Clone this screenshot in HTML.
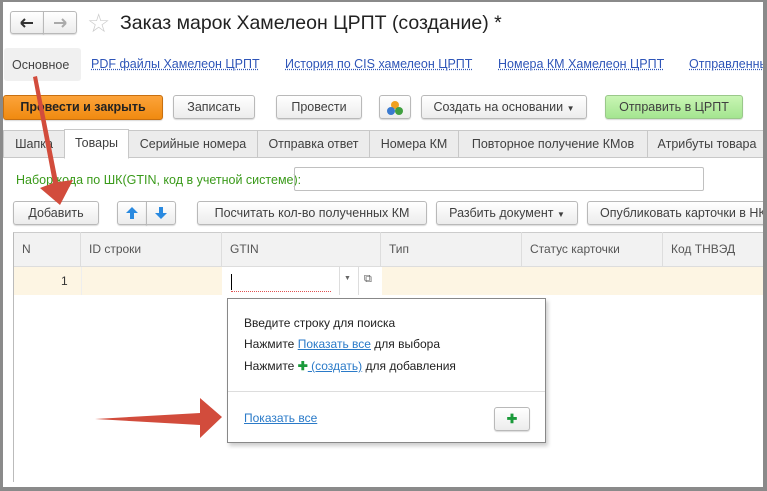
<!DOCTYPE html>
<html><head><meta charset="utf-8"><style>
*{box-sizing:border-box}
body{margin:0;width:767px;height:491px;background:#8a8a8a;font-family:"Liberation Sans",sans-serif;font-size:12px;color:#333;overflow:hidden;position:relative}
#w{position:absolute;left:3px;top:2px;width:760px;height:485px;background:#fff;overflow:hidden}
.a{position:absolute;white-space:nowrap}
.btn{position:absolute;height:24px;border:1px solid #b9b9b9;border-radius:3px;background:linear-gradient(#fff,#ececec);box-shadow:0 1px 1px rgba(0,0,0,.15);text-align:center;line-height:22px;color:#404040;font-size:12.5px;white-space:nowrap}
.lnk{color:#2e55b8;text-decoration:underline;text-decoration-style:dotted;position:absolute;white-space:nowrap;font-size:12.5px}
.tab{position:absolute;top:128px;height:28px;border:1px solid #c8c8c8;background:#ececec;line-height:26px;text-align:center;color:#404040;font-size:12.5px}
.th{position:absolute;top:230px;height:34px;line-height:34px;border-right:1px solid #ddd;padding-left:8px;color:#555}
</style></head><body><div id="w">
<div class="btn" style="left:7px;top:9px;width:34px;height:23px;border-radius:3px 0 0 3px"><svg width="16" height="12" viewBox="0 0 16 12" style="margin-top:5px"><path d="M2 6H14M2 6L6 2M2 6L6 10" stroke="#333" stroke-width="2" fill="none"/></svg></div>
<div class="btn" style="left:40px;top:9px;width:34px;height:23px;border-radius:0 3px 3px 0"><svg width="16" height="12" viewBox="0 0 16 12" style="margin-top:5px"><path d="M2 6H14M14 6L10 2M14 6L10 10" stroke="#aaa" stroke-width="2" fill="none"/></svg></div>
<div class="a" style="left:84px;top:6px;font-size:26px;color:#ccc">☆</div>
<div class="a" style="left:117px;top:10px;font-size:19.5px;color:#222">Заказ марок Хамелеон ЦРПТ (создание) *</div>
<div class="a" style="left:1px;top:46px;width:77px;height:33px;background:#f0f0f0;border-radius:3px"></div>
<div class="a" style="left:9px;top:56px;color:#444;font-size:12.5px">Основное</div>
<div class="lnk" style="left:88px;top:55px">PDF файлы  Хамелеон ЦРПТ</div>
<div class="lnk" style="left:282px;top:55px">История по CIS хамелеон ЦРПТ</div>
<div class="lnk" style="left:495px;top:55px">Номера КМ Хамелеон ЦРПТ</div>
<div class="lnk" style="left:686px;top:55px">Отправленные</div>
<div class="btn" style="left:0;top:93px;width:160px;height:25px;background:linear-gradient(#fca33a,#f08a10);border-color:#c87010;color:#222;font-weight:bold">Провести и закрыть</div>
<div class="btn" style="left:170px;top:93px;width:82px">Записать</div>
<div class="btn" style="left:273px;top:93px;width:86px">Провести</div>
<div class="btn" style="left:376px;top:93px;width:32px"><svg width="18" height="16" viewBox="0 0 18 16" style="margin-top:4px"><circle cx="9" cy="5" r="4" fill="#f0a020"/><circle cx="5" cy="11" r="4" fill="#3a7ad0"/><circle cx="13" cy="11" r="4" fill="#40a040"/></svg></div>
<div class="btn" style="left:418px;top:93px;width:166px">Создать на основании <span style="font-size:8px">▼</span></div>
<div class="btn" style="left:602px;top:93px;width:138px;background:linear-gradient(#c9f5b4,#a4e590);border-color:#9ac88a">Отправить в ЦРПТ</div>
<div class="a" style="left:0;top:155px;width:760px;border-top:1px solid #c8c8c8"></div>
<div class="tab" style="left:0;width:62px">Шапка</div>
<div class="tab" style="left:61px;width:65px;background:#fff;border-bottom-color:#fff;top:127px;height:30px">Товары</div>
<div class="tab" style="left:125px;width:130px">Серийные номера</div>
<div class="tab" style="left:254px;width:113px">Отправка ответ</div>
<div class="tab" style="left:366px;width:90px">Номера КМ</div>
<div class="tab" style="left:455px;width:190px">Повторное получение КМов</div>
<div class="tab" style="left:644px;width:120px">Атрибуты товара</div>
<div class="a" style="left:13px;top:171px;color:#3a9a1a;font-size:12.5px">Набор кода по ШК(GTIN, код в учетной системе):</div>
<div class="a" style="left:291px;top:165px;width:410px;height:24px;border:1px solid #c0c0c0;border-radius:2px"></div>
<div class="btn" style="left:10px;top:199px;width:86px">Добавить</div>
<div class="btn" style="left:114px;top:199px;width:30px;border-radius:3px 0 0 3px"><svg width="14" height="14" viewBox="0 0 14 14" style="margin-top:4px"><path d="M7 1L13 7H9V13H5V7H1Z" fill="#2a8ae0"/></svg></div>
<div class="btn" style="left:143px;top:199px;width:30px;border-radius:0 3px 3px 0"><svg width="14" height="14" viewBox="0 0 14 14" style="margin-top:4px"><path d="M7 13L13 7H9V1H5V7H1Z" fill="#2a8ae0"/></svg></div>
<div class="btn" style="left:194px;top:199px;width:230px">Посчитать кол-во полученных КМ</div>
<div class="btn" style="left:433px;top:199px;width:142px">Разбить документ <span style="font-size:8px">▼</span></div>
<div class="btn" style="left:584px;top:199px;width:190px;text-align:left;padding-left:12px">Опубликовать карточки в НК</div>
<div class="a" style="left:10px;top:230px;width:760px;height:250px;border-left:1px solid #bbb;border-top:1px solid #ccc"></div>
<div class="a" style="left:11px;top:231px;width:760px;height:34px;background:#f2f2f2;border-bottom:1px solid #ddd"></div>
<div class="th" style="left:11px;width:67px">N</div>
<div class="th" style="left:78px;width:141px">ID строки</div>
<div class="th" style="left:219px;width:159px">GTIN</div>
<div class="th" style="left:378px;width:141px">Тип</div>
<div class="th" style="left:519px;width:141px">Статус карточки</div>
<div class="th" style="left:660px;width:110px">Код ТНВЭД</div>
<div class="a" style="left:11px;top:265px;width:760px;height:28px;background:#fdf5e3"></div>
<div class="a" style="left:78px;top:265px;width:1px;height:28px;background:#eee"></div>
<div class="a" style="left:58px;top:272px;color:#333">1</div>
<div class="a" style="left:219px;top:265px;width:160px;height:28px;background:#fff"></div>
<div class="a" style="left:228px;top:272px;width:1px;height:16px;background:#000"></div>
<div class="a" style="left:228px;top:289px;width:100px;border-top:1px dotted #e05050"></div>
<div class="a" style="left:336px;top:265px;width:1px;height:28px;background:#ddd"></div>
<div class="a" style="left:341px;top:273px;font-size:7px;color:#666">▼</div>
<div class="a" style="left:355px;top:265px;width:1px;height:28px;background:#ddd"></div>
<div class="a" style="left:361px;top:271px;font-size:11px;color:#555">⧉</div>
<div class="a" style="left:224px;top:296px;width:319px;height:145px;border:1px solid #888;background:#fff;box-shadow:2px 3px 4px rgba(0,0,0,.2)"></div>
<div class="a" style="left:241px;top:314px;color:#222">Введите строку для поиска</div>
<div class="a" style="left:241px;top:335px;color:#222">Нажмите <span style="color:#2a7ac8;text-decoration:underline">Показать все</span> для выбора</div>
<div class="a" style="left:241px;top:357px;color:#222">Нажмите <b style="color:#1a9a3a">✚</b><span style="color:#2a7ac8;text-decoration:underline"> (создать)</span> для добавления</div>
<div class="a" style="left:225px;top:389px;width:317px;border-top:1px solid #ddd"></div>
<div class="a" style="left:241px;top:409px;color:#2a7ac8;text-decoration:underline">Показать все</div>
<div class="btn" style="left:491px;top:405px;width:36px;color:#1a9a3a;font-weight:bold">✚</div>
<svg class="a" style="left:0;top:0" width="760" height="485"><g fill="#d24c3c">
<polygon points="30,75 34,74 55,180 70,178 57,203 37,186 50,181"/>
<polygon points="92,417 197,411 197,396 219,415 197,436 197,423"/></g></svg>
</div></body></html>
